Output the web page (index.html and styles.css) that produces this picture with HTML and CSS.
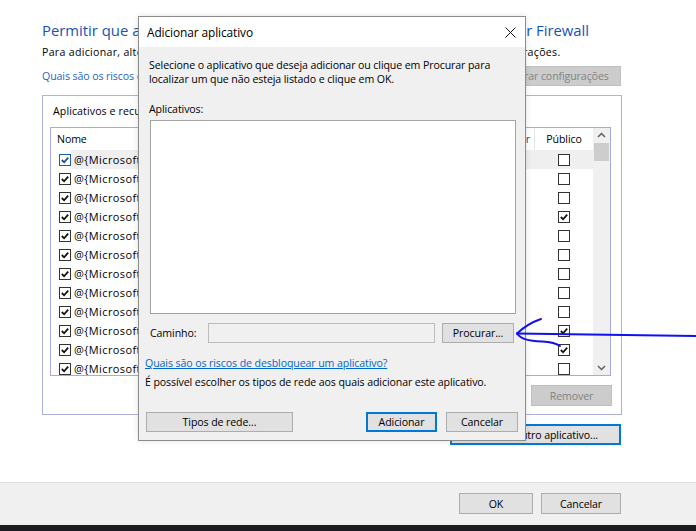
FILE: index.html
```html
<!DOCTYPE html>
<html lang="pt-BR">
<head>
<meta charset="utf-8">
<title>Aplicativos permitidos</title>
<link rel="stylesheet" href="styles.css">
</head>
<body>
<div class="window">
  <h1 class="main-title">Permitir que aplicativos se comuniquem através do Windows Defender Firewall</h1>
  <p class="subtitle">Para adicionar, alterar ou remover aplicativos e portas permitidos, clique em Alterar configurações.</p>
  <div class="link-row">
    <a class="page-link">Quais são os riscos de permitir que um aplicativo se comunique?</a>
    <button class="btn btn-disabled btn-change">Alterar configurações</button>
  </div>
  <div class="group">
    <div class="group-label">Aplicativos e recursos permitidos:</div>
    <div class="list">
      <div class="list-main">
        <div class="list-head">
          <div class="hcell hname">Nome</div>
          <div class="hcell hpriv">Particular</div>
          <div class="hcell hpub">Público</div>
        </div>
        <div class="row row-hover">
          <div class="cname"><span class="cb cb-blue"><svg viewBox="0 0 11 11"><path d="M2 5.5 L4.5 8 L9 3"/></svg></span><span class="appname">@{Microsoft.AAD.BrokerPlugin}</span></div>
          <div class="ccell"><span class="cb"><svg viewBox="0 0 11 11"><path d="M2 5.5 L4.5 8 L9 3"/></svg></span></div>
          <div class="ccell"><span class="cb"></span></div>
        </div>
        <div class="row">
          <div class="cname"><span class="cb"><svg viewBox="0 0 11 11"><path d="M2 5.5 L4.5 8 L9 3"/></svg></span><span class="appname">@{Microsoft.AccountsControl}</span></div>
          <div class="ccell"><span class="cb"><svg viewBox="0 0 11 11"><path d="M2 5.5 L4.5 8 L9 3"/></svg></span></div>
          <div class="ccell"><span class="cb"></span></div>
        </div>
        <div class="row">
          <div class="cname"><span class="cb"><svg viewBox="0 0 11 11"><path d="M2 5.5 L4.5 8 L9 3"/></svg></span><span class="appname">@{Microsoft.BingWeather}</span></div>
          <div class="ccell"><span class="cb"><svg viewBox="0 0 11 11"><path d="M2 5.5 L4.5 8 L9 3"/></svg></span></div>
          <div class="ccell"><span class="cb"></span></div>
        </div>
        <div class="row">
          <div class="cname"><span class="cb"><svg viewBox="0 0 11 11"><path d="M2 5.5 L4.5 8 L9 3"/></svg></span><span class="appname">@{Microsoft.GetHelp}</span></div>
          <div class="ccell"><span class="cb"><svg viewBox="0 0 11 11"><path d="M2 5.5 L4.5 8 L9 3"/></svg></span></div>
          <div class="ccell"><span class="cb"><svg viewBox="0 0 11 11"><path d="M2 5.5 L4.5 8 L9 3"/></svg></span></div>
        </div>
        <div class="row">
          <div class="cname"><span class="cb"><svg viewBox="0 0 11 11"><path d="M2 5.5 L4.5 8 L9 3"/></svg></span><span class="appname">@{Microsoft.Getstarted}</span></div>
          <div class="ccell"><span class="cb"><svg viewBox="0 0 11 11"><path d="M2 5.5 L4.5 8 L9 3"/></svg></span></div>
          <div class="ccell"><span class="cb"></span></div>
        </div>
        <div class="row">
          <div class="cname"><span class="cb"><svg viewBox="0 0 11 11"><path d="M2 5.5 L4.5 8 L9 3"/></svg></span><span class="appname">@{Microsoft.LockApp}</span></div>
          <div class="ccell"><span class="cb"><svg viewBox="0 0 11 11"><path d="M2 5.5 L4.5 8 L9 3"/></svg></span></div>
          <div class="ccell"><span class="cb"></span></div>
        </div>
        <div class="row">
          <div class="cname"><span class="cb"><svg viewBox="0 0 11 11"><path d="M2 5.5 L4.5 8 L9 3"/></svg></span><span class="appname">@{Microsoft.MicrosoftEdge}</span></div>
          <div class="ccell"><span class="cb"><svg viewBox="0 0 11 11"><path d="M2 5.5 L4.5 8 L9 3"/></svg></span></div>
          <div class="ccell"><span class="cb"></span></div>
        </div>
        <div class="row">
          <div class="cname"><span class="cb"><svg viewBox="0 0 11 11"><path d="M2 5.5 L4.5 8 L9 3"/></svg></span><span class="appname">@{Microsoft.People}</span></div>
          <div class="ccell"><span class="cb"><svg viewBox="0 0 11 11"><path d="M2 5.5 L4.5 8 L9 3"/></svg></span></div>
          <div class="ccell"><span class="cb"></span></div>
        </div>
        <div class="row">
          <div class="cname"><span class="cb"><svg viewBox="0 0 11 11"><path d="M2 5.5 L4.5 8 L9 3"/></svg></span><span class="appname">@{Microsoft.Photos}</span></div>
          <div class="ccell"><span class="cb"><svg viewBox="0 0 11 11"><path d="M2 5.5 L4.5 8 L9 3"/></svg></span></div>
          <div class="ccell"><span class="cb"></span></div>
        </div>
        <div class="row">
          <div class="cname"><span class="cb"><svg viewBox="0 0 11 11"><path d="M2 5.5 L4.5 8 L9 3"/></svg></span><span class="appname">@{Microsoft.SkypeApp}</span></div>
          <div class="ccell"><span class="cb"><svg viewBox="0 0 11 11"><path d="M2 5.5 L4.5 8 L9 3"/></svg></span></div>
          <div class="ccell"><span class="cb"><svg viewBox="0 0 11 11"><path d="M2 5.5 L4.5 8 L9 3"/></svg></span></div>
        </div>
        <div class="row">
          <div class="cname"><span class="cb"><svg viewBox="0 0 11 11"><path d="M2 5.5 L4.5 8 L9 3"/></svg></span><span class="appname">@{Microsoft.Windows.Cortana}</span></div>
          <div class="ccell"><span class="cb"><svg viewBox="0 0 11 11"><path d="M2 5.5 L4.5 8 L9 3"/></svg></span></div>
          <div class="ccell"><span class="cb"><svg viewBox="0 0 11 11"><path d="M2 5.5 L4.5 8 L9 3"/></svg></span></div>
        </div>
        <div class="row">
          <div class="cname"><span class="cb"><svg viewBox="0 0 11 11"><path d="M2 5.5 L4.5 8 L9 3"/></svg></span><span class="appname">@{Microsoft.WindowsStore}</span></div>
          <div class="ccell"><span class="cb"><svg viewBox="0 0 11 11"><path d="M2 5.5 L4.5 8 L9 3"/></svg></span></div>
          <div class="ccell"><span class="cb"></span></div>
        </div>
      </div>
      <div class="scrollbar">
        <div class="sb-arrow"><svg viewBox="0 0 9 6"><path d="M1 5 L4.5 1.5 L8 5"/></svg></div>
        <div class="sb-thumb"></div>
        <div class="sb-track"></div>
        <div class="sb-arrow"><svg viewBox="0 0 9 6"><path d="M1 1 L4.5 4.5 L8 1"/></svg></div>
      </div>
    </div>
    <div class="group-actions">
      <button class="btn btn-disabled btn-remove">Remover</button>
    </div>
  </div>
  <div class="allow-row">
    <button class="btn btn-focus btn-allow">Permitir outro aplicativo...</button>
  </div>
</div>
<div class="footer">
  <button class="btn btn-ok">OK</button>
  <button class="btn btn-cancel">Cancelar</button>
</div>
<div class="taskbar"></div>

<div class="dialog">
  <div class="dlg-titlebar">
    <span class="dlg-title">Adicionar aplicativo</span>
    <svg class="dlg-close" viewBox="0 0 11 11"><path d="M0.5 0.5 L10.5 10.5 M10.5 0.5 L0.5 10.5"/></svg>
  </div>
  <div class="dlg-body">
    <p class="dlg-intro">Selecione o aplicativo que deseja adicionar ou clique em Procurar para<br>localizar um que não esteja listado e clique em OK.</p>
    <div class="dlg-label">Aplicativos:</div>
    <div class="dlg-listbox"></div>
    <div class="path-row">
      <span class="path-label">Caminho:</span>
      <span class="path-input"></span>
      <button class="btn btn-browse">Procurar...</button>
    </div>
    <a class="dlg-link">Quais são os riscos de desbloquear um aplicativo?</a>
    <p class="dlg-note">É possível escolher os tipos de rede aos quais adicionar este aplicativo.</p>
    <div class="dlg-actions">
      <button class="btn btn-types">Tipos de rede...</button>
      <div class="dlg-actions-right">
        <button class="btn btn-focus btn-add">Adicionar</button>
        <button class="btn btn-dlg-cancel">Cancelar</button>
      </div>
    </div>
  </div>
</div>

<svg class="annotation" viewBox="0 0 696 531" width="696" height="531">
  <path d="M696 336 C 650 335.5, 590 334.5, 517 333.5"/>
  <path d="M517 333.5 C 524 327, 532 322, 541 319"/>
  <path d="M517 333.5 C 521 339, 528 341, 542 341.5 C 551 342, 556 343, 560 346"/>
</svg>
</body>
</html>
```

FILE: styles.css
```css
* { box-sizing: border-box; }
html, body { margin: 0; padding: 0; }
body {
  width: 696px;
  height: 531px;
  overflow: hidden;
  position: relative;
  background: #fff;
  color: #000;
  font-family: "Open Sans", "Noto Sans", sans-serif;
  font-size: 10.6px;
  letter-spacing: -0.1px;
}
p { margin: 0; }

.window {
  height: 482px;
  padding: 19px 0 0 42px;
  background: #fff;
}
.main-title {
  margin: 0;
  font-weight: normal;
  font-size: 14.85px;
  letter-spacing: 0;
  line-height: 22px;
  color: #1553b4;
  white-space: nowrap;
}
.subtitle {
  margin-top: 3px;
  line-height: 16px;
  letter-spacing: 0.3px;
  white-space: nowrap;
}
.link-row {
  width: 579px;
  height: 20px;
  margin-top: 6px;
  display: flex;
  align-items: center;
  justify-content: space-between;
}
.page-link {
  color: #1a66c6;
  line-height: 16px;
  white-space: nowrap;
}

.btn {
  font: inherit;
  letter-spacing: inherit;
  color: #000;
  background: #e1e1e1;
  border: 1px solid #adadad;
  height: 21px;
  padding: 0;
  margin: 0;
  display: inline-flex;
  align-items: center;
  justify-content: center;
  white-space: nowrap;
}
.btn-disabled {
  background: #cccccc;
  border-color: #bfbfbf;
  color: #838383;
}
.btn-focus {
  border: 2px solid #0078d7;
}
.btn-change { width: 128px; height: 20px; }

.group {
  width: 580px;
  margin-top: 9px;
  border: 1px solid #b0b0e0;
  padding: 7px 10px 8px 7px;
}
.group-label {
  line-height: 16px;
  margin: 0 0 8px 3px;
  letter-spacing: 0.1px;
  white-space: nowrap;
}
.list {
  height: 249px;
  border: 1px solid #a9a9dc;
  display: flex;
  overflow: hidden;
}
.list-main {
  flex: 1;
  overflow: hidden;
}
.list-head,
.row {
  display: grid;
  grid-template-columns: 1fr 86px 58px;
}
.list-head {
  height: 22px;
  align-items: stretch;
}
.hcell {
  display: flex;
  align-items: center;
  border-right: 1px solid #e5e5e5;
  white-space: nowrap;
  overflow: hidden;
}
.hname { padding-left: 6px; }
.hpriv { justify-content: flex-end; padding-right: 4px; color: #1f3d8a; }
.hpub { justify-content: center; border-right: none; }

.row {
  height: 19px;
  align-items: center;
}
.row-hover {
  background: linear-gradient(to right, transparent 20px, #efefef 20px);
}
.cname {
  display: flex;
  align-items: center;
  padding-left: 8px;
  white-space: nowrap;
  overflow: hidden;
}
.appname {
  margin-left: 3px;
  line-height: 19px;
  font-size: 11px;
  letter-spacing: 0.4px;
}
.ccell {
  display: flex;
  justify-content: center;
  align-items: center;
}
.cb {
  width: 12px;
  height: 12px;
  border: 1px solid #333;
  background: #fff;
  display: inline-flex;
  align-items: center;
  justify-content: center;
  flex: none;
}
.cb svg {
  width: 10px;
  height: 10px;
  fill: none;
  stroke: #111;
  stroke-width: 2;
}
.cb-blue { border-color: #1c5fa8; }
.cb-blue svg { stroke: #1c4f8f; }

.scrollbar {
  width: 17px;
  background: #f0f0f0;
  display: flex;
  flex-direction: column;
}
.sb-arrow {
  height: 14px;
  display: flex;
  align-items: center;
  justify-content: center;
}
.sb-arrow svg {
  width: 9px;
  height: 6px;
  fill: none;
  stroke: #606060;
  stroke-width: 1.5;
}
.sb-thumb {
  height: 18px;
  margin: 1px 1px 0;
  background: #cdcdcd;
}
.sb-track { flex: 1; }

.group-actions {
  margin-top: 9px;
  display: flex;
  justify-content: flex-end;
}
.btn-remove { width: 81px; margin-right: -1px; }

.allow-row {
  width: 580px;
  margin-top: 9px;
  display: flex;
  justify-content: flex-end;
}
.btn-allow { width: 171px; margin-right: 1px; }

.footer {
  height: 43px;
  border-top: 1px solid #dfdfdf;
  background: #f0f0f0;
  display: flex;
  justify-content: flex-end;
  align-items: flex-start;
  gap: 8px;
  padding: 10px 75px 0 0;
}
.btn-ok { width: 74px; }
.btn-cancel { width: 80px; }
.taskbar {
  height: 6px;
  background: #1c1c21;
}

/* Dialog window overlaying the page */
.dialog {
  position: absolute;
  left: 138px;
  top: 16px;
  width: 388px;
  height: 425px;
  border: 1px solid #8c8c8c;
  background: #f0f0f0;
  display: flex;
  flex-direction: column;
  box-shadow: 0 0 6px rgba(0, 0, 0, 0.12);
}
.dlg-titlebar {
  height: 30px;
  background: #fff;
  display: flex;
  align-items: center;
  justify-content: space-between;
  padding: 0 9px 0 8px;
  flex: none;
}
.dlg-title {
  font-size: 11.9px;
  line-height: 30px;
  white-space: nowrap;
}
.dlg-close {
  width: 11px;
  height: 11px;
  fill: none;
  stroke: #111;
  stroke-width: 1;
}
.dlg-body {
  flex: 1;
  display: flex;
  flex-direction: column;
  padding: 11px 10px 8px 10px;
}
.dlg-intro {
  line-height: 14px;
  white-space: nowrap;
}
.dlg-label {
  margin-top: 16px;
  line-height: 14px;
}
.dlg-listbox {
  margin: 4px 0 0 1px;
  width: 366px;
  height: 194px;
  background: #fff;
  border: 1px solid #a3a3a3;
}
.path-row {
  margin-top: 9px;
  height: 20px;
  display: flex;
  align-items: center;
}
.path-label {
  width: 59px;
  padding-left: 1px;
}
.path-input {
  width: 227px;
  height: 20px;
  border: 1px solid #bcbcbc;
  background: #f0f0f0;
}
.btn-browse {
  width: 72px;
  height: 20px;
  margin-left: 7px;
}
.dlg-link {
  margin: 13px 0 0 -4px;
  line-height: 15px;
  color: #0066cc;
  text-decoration: underline;
  white-space: nowrap;
}
.dlg-note {
  margin: 4px 0 0 -4px;
  line-height: 15px;
  white-space: nowrap;
}
.dlg-actions {
  margin-top: auto;
  display: flex;
  justify-content: space-between;
  margin-left: -3px;
  margin-right: -3px;
}
.dlg-actions-right {
  display: flex;
  gap: 9px;
}
.btn-types { width: 147px; height: 20px; }
.btn-add { width: 71px; height: 20px; }
.btn-dlg-cancel { width: 72px; height: 20px; }

/* Hand-drawn annotation arrow over the screenshot */
.annotation {
  position: absolute;
  left: 0;
  top: 0;
  pointer-events: none;
  fill: none;
  stroke: #1010f0;
  stroke-width: 2;
  stroke-linecap: round;
  stroke-linejoin: round;
}
```
